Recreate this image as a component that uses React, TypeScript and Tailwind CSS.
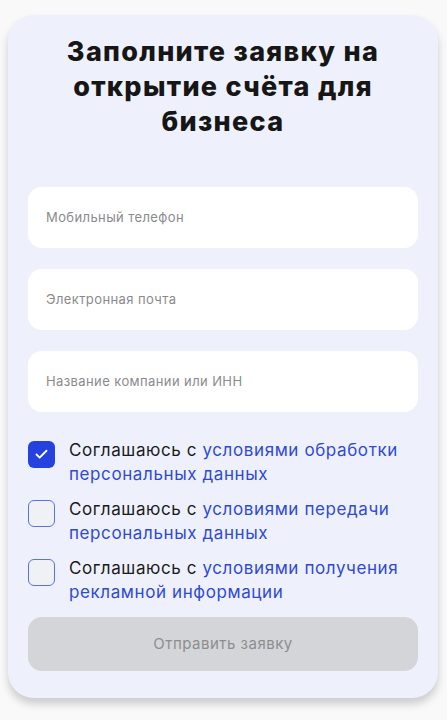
import { Check } from 'lucide-react';

const fields = ['Мобильный телефон', 'Электронная почта', 'Название компании или ИНН'];

const agreements = [
  { link: 'условиями обработки персональных данных', checked: true },
  { link: 'условиями передачи персональных данных', checked: false },
  { link: 'условиями получения рекламной информации', checked: false },
];

const App = () => {
  return (
    <div className="min-h-[720px] bg-[#f9f9fa] px-2 pt-[15px] font-['Inter',sans-serif]">
      <div className="w-[430px] rounded-[26px] bg-[#eef1fb] px-5 pt-[19px] pb-[27px] shadow-[0_6px_8px_rgba(0,0,0,0.18)]">
        <h1 className="px-4 text-center text-[27px] font-extrabold leading-[35px] tracking-[1.3px] text-[#161616]">
          Заполните заявку на открытие счёта для бизнеса
        </h1>

        <div className="mt-[48px] flex flex-col gap-[21px]">
          {fields.map(f => (
            <div key={f} className="flex h-[61px] items-center rounded-[14px] bg-white px-[18px]">
              <span className="text-[13px] tracking-[0.4px] text-[#8a8a8e]">{f}</span>
            </div>
          ))}
        </div>

        <div className="mt-[26px] flex flex-col gap-[11px]">
          {agreements.map(a => (
            <div key={a.link} className="flex items-start">
              <div
                className={
                  a.checked
                    ? 'mt-[3px] flex h-[27px] w-[27px] shrink-0 items-center justify-center rounded-[6px] bg-[#2541e0]'
                    : 'mt-[3px] h-[27px] w-[27px] shrink-0 rounded-[6px] border border-[#5a72e6] bg-[#f0f1f5]'
                }
              >
                {a.checked && <Check className="h-[15px] w-[15px] text-white" strokeWidth={3} />}
              </div>
              <p className="ml-[14px] text-[17px] leading-[24px] tracking-[0.6px] text-[#1a1a1a]">
                Соглашаюсь с <span className="text-[#2e49d6]">{a.link}</span>
              </p>
            </div>
          ))}
        </div>

        <button className="mt-[13px] flex h-[54px] w-full items-center justify-center rounded-[14px] bg-[#d4d5d8] text-[15px] tracking-[0.5px] text-[#8d8d90]">
          Отправить заявку
        </button>
      </div>
    </div>
  );
};

export default App;
